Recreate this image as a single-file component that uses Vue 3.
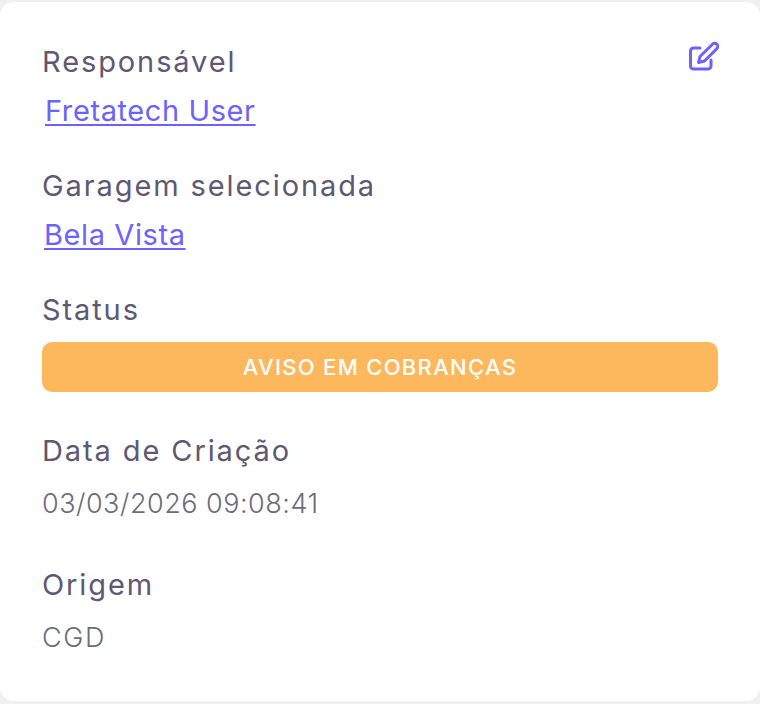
<script setup>
const fields = [
  { label: 'Responsável', link: 'Fretatech User', indent: 'indent-a' },
  { label: 'Garagem selecionada', link: 'Bela Vista', indent: 'indent-b' }
]
</script>

<template>
  <div class="page">
    <section class="card">
      <button class="edit" aria-label="Editar">
        <svg width="30" height="30" viewBox="0 0 30 30" fill="none" stroke="#6c63ff" stroke-width="3" stroke-linecap="round" stroke-linejoin="round">
          <path d="M11 7H4.500A3 3 0 0 0 1.500 10v15A3 3 0 0 0 4.500 28H19a3 3 0 0 0 3-3V19" />
          <path d="M23.500 3.200a3.100 3.100 0 0 1 4.400 4.400L15.500 20l-6 1.500 1.500-6L23.500 3.200z" />
        </svg>
      </button>

      <div v-for="f in fields" :key="f.label" class="field">
        <div class="label">{{ f.label }}</div>
        <a class="link" :class="f.indent" href="#">{{ f.link }}</a>
      </div>

      <div class="field status">
        <div class="label">Status</div>
        <div class="badge">AVISO EM COBRANÇAS</div>
      </div>

      <div class="field date">
        <div class="label">Data de Criação</div>
        <div class="value">03/03/2026 09:08:41</div>
      </div>

      <div class="field origin">
        <div class="label">Origem</div>
        <div class="value">CGD</div>
      </div>
    </section>
  </div>
</template>

<style>
html, body {
  margin: 0;
  background: #f0f0f0;
}
</style>

<style scoped>
.page {
  height: 704px;
  padding: 2px 0 3px;
  box-sizing: border-box;
  font-family: Inter, "Noto Sans", sans-serif;
}

.card {
  position: relative;
  height: 100%;
  box-sizing: border-box;
  padding: 40px 42px 0;
  background: #fff;
  border-radius: 14px;
}

.edit {
  position: absolute;
  top: 39px;
  right: 41px;
  padding: 0;
  border: 0;
  background: none;
  line-height: 0;
}

.field {
  display: flex;
  flex-direction: column;
  align-items: flex-start;
  margin-bottom: 35px;
}

.label {
  height: 40px;
  line-height: 40px;
  font-size: 29px;
  font-weight: 400;
  letter-spacing: 1.9px;
  color: #5e5873;
}

.link {
  height: 40px;
  line-height: 40px;
  margin-top: 9px;
  font-size: 29px;
  letter-spacing: 0.6px;
  color: #6c63ff;
  text-decoration: underline;
  text-decoration-thickness: 2px;
  text-underline-offset: 3px;
}

.indent-a {
  margin-left: 3px;
}

.indent-b {
  margin-left: 2px;
}

.badge {
  align-self: stretch;
  height: 50px;
  line-height: 50px;
  margin-top: 12px;
  border-radius: 10px;
  background: #fdb85e;
  color: #fff;
  font-size: 22px;
  font-weight: 500;
  letter-spacing: 1.3px;
  text-align: center;
}

.status {
  margin-bottom: 39px;
}

.value {
  height: 40px;
  line-height: 40px;
  margin-top: 13px;
  font-size: 27px;
  font-weight: 300;
  letter-spacing: 0.5px;
  color: #6e6b7b;
}

.date {
  margin-bottom: 41px;
}

.origin .value {
  letter-spacing: 1.6px;
}
</style>
